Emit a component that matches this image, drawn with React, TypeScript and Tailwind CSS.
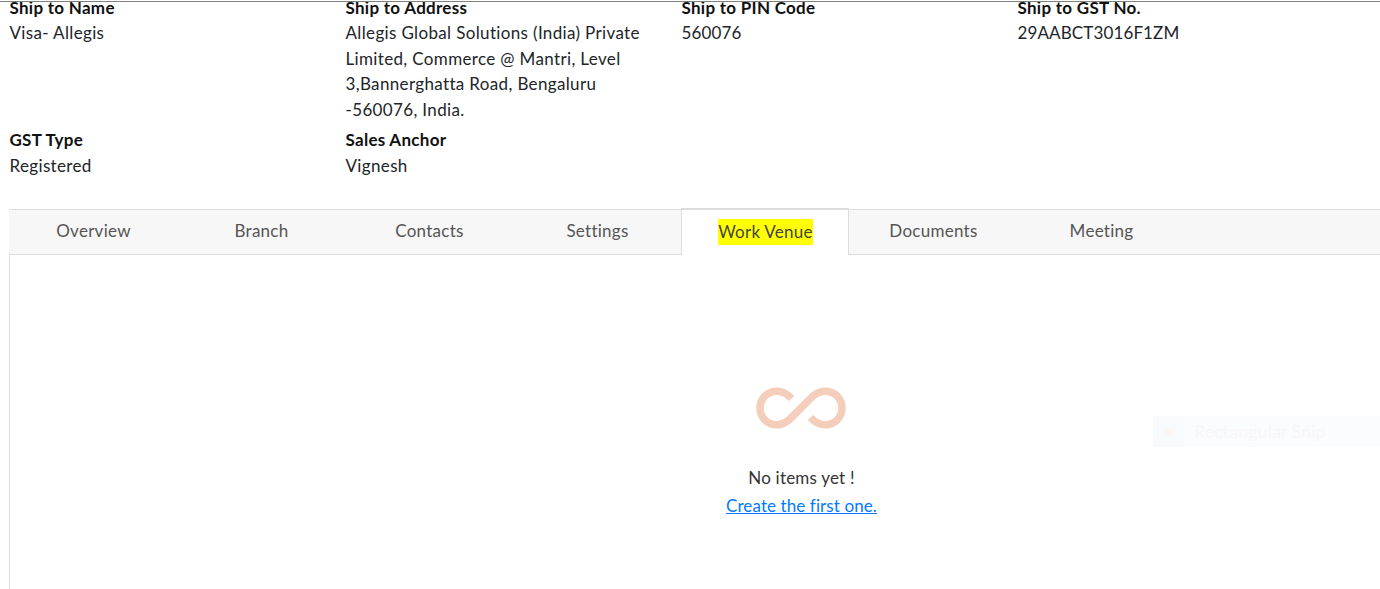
function Field({ label, children, tight }: { label: string; children: React.ReactNode; tight?: boolean }) {
  return (
    <div className="w-[336px] pr-[28px]">
      <div className="h-[25.5px] font-bold leading-[25.5px] tracking-[0.28px] text-[#111]">{label}</div>
      <div className={tight ? "leading-[25.5px] tracking-[0.12px] text-[#212529]" : "leading-[25.5px] tracking-[0.35px] text-[#212529]"}>
        {children}
      </div>
    </div>
  );
}

const tabs = ["Overview", "Branch", "Contacts", "Settings", "Work Venue", "Documents", "Meeting"];

export default function App() {
  return (
    <div className="relative h-[589px] w-[1380px] overflow-hidden bg-white text-[17px] [font-family:Lato,'Noto_Sans',sans-serif]">
      <div className="absolute left-0 top-[1px] z-10 h-px w-full bg-[#808080]" />
      <div className="-mt-[5.25px] pl-[9.5px]">
        <div className="flex">
          <Field label="Ship to Name">Visa- Allegis</Field>
          <Field label="Ship to Address">
            Allegis Global Solutions (India) Private Limited, Commerce @ Mantri, Level 3,Bannerghatta Road, Bengaluru -560076, India.
          </Field>
          <Field label="Ship to PIN Code" tight>560076</Field>
          <Field label="Ship to GST No." tight>29AABCT3016F1ZM</Field>
        </div>
        <div className="mt-[4.75px] flex">
          <Field label="GST Type">Registered</Field>
          <Field label="Sales Anchor">Vignesh</Field>
        </div>
      </div>
      <div className="ml-[9px] mt-[30.5px] h-[380px] border-l border-[#dcdcdc]">
        <div className="-ml-px flex h-[46px] border-y border-[#dedede] bg-[#f7f7f7] pl-px">
          {tabs.map((t) =>
            t === "Work Venue" ? (
              <div
                key={t}
                className="-ml-px -mt-[2px] mr-px flex h-[47px] w-[168px] items-center justify-center border-x border-t-2 border-[#dcdcdc] bg-white pl-px text-[#444]"
              >
                <span className="bg-[#ffff00] leading-[26px] tracking-[0.27px]">{t}</span>
              </div>
            ) : (
              <div
                key={t}
                className="-ml-px mr-px flex w-[168px] items-center justify-center pb-px pl-px tracking-[0.27px] text-[#555]"
              >
                {t}
              </div>
            ),
          )}
        </div>
        <div className="flex flex-col items-center pl-[212px] pt-[132px]">
          <svg width="90" height="42" viewBox="0 0 90 42" fill="none" stroke="#f4cdbb" strokeWidth="7.5">
            <path d="M35.5 11.5 C31 6.5 26.5 4.2 21 4.2 C11.5 4.2 4 11.5 4 21 C4 30.5 11.5 37.8 21 37.8 C27 37.8 31 35 35 31 L54 12 C58 7.5 63 4.2 69 4.2 C78.5 4.2 86 11.5 86 21 C86 30.5 78.5 37.8 69 37.8 C63.5 37.8 59 35.5 54.5 30.5" />
          </svg>
          <div className="mt-[36px] pl-px leading-[25.5px] tracking-[0.2px] text-[#333]">No items yet !</div>
          <a className="mt-[3px] pl-px leading-[25.5px] tracking-[0.1px] text-[#007bff] underline">Create the first one.</a>
        </div>
      </div>
      <div className="absolute left-[1153px] top-[416px] flex h-[31px] w-[227px] items-center bg-[#fbfcfe] text-[#f8f6f6]">
        <div className="flex h-full w-[31px] items-center justify-center bg-[#f8fbfe]">
          <span className="h-[10px] w-[10px] rounded-full bg-[#f9f6f4]" />
        </div>
        <span className="ml-[10px] text-[18px]">Rectangular Snip</span>
      </div>
    </div>
  );
}
